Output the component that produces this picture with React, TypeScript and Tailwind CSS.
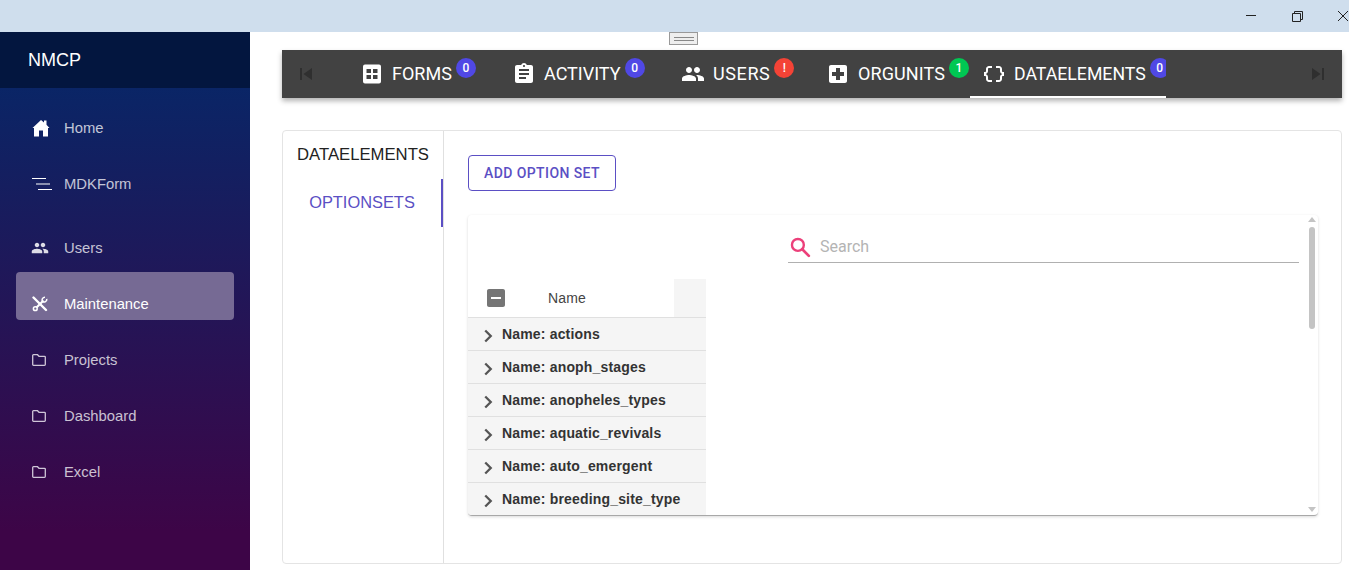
import React from "react";
import {
  MdAssignment,
  MdDataObject,
  MdIndeterminateCheckBox,
  MdLocalHospital,
  MdPeople,
  MdSkipNext,
  MdSkipPrevious,
} from "react-icons/md";

const arial = "font-['Liberation_Sans',Arial,sans-serif]";
const roboto = "font-['Roboto',sans-serif]";

const HomeIcon = () => (
  <svg width="18" height="18" viewBox="0 0 18 18" fill="white">
    <path d="M9 1 12 3.600V1.500H14.500V5.800L17.500 9H16V17.500H11V11.500H7V17.500H2V9H.5z" />
  </svg>
);

const LinesIcon = () => (
  <svg width="20" height="14" viewBox="0 0 20 14" stroke="white" strokeWidth="1.2">
    <path d="M0 1.500H14M4 7H18M6 12.500H20" />
  </svg>
);

const ToolsIcon = () => (
  <svg width="16" height="16" viewBox="0 0 16 16" fill="none" stroke="white">
    <path d="M1.500 1.500 14 14" strokeWidth="2.400" strokeLinecap="round" />
    <path d="M11.500 4.500 4.500 11.500" strokeWidth="2.200" />
    <circle cx="3.300" cy="12.700" r="1.900" strokeWidth="1.500" />
    <path d="M14.800 2.800A2.800 2.800 0 0 1 10.500 5.500M13 1.200A2.800 2.800 0 0 0 10.500 5.500" strokeWidth="1.500" />
  </svg>
);

const FolderIcon = () => (
  <svg width="14" height="12" viewBox="0 0 14 12" fill="none" stroke="#cfc6d8" strokeWidth="1.300">
    <path d="M1.500.7H5.500L7 2.300H12.500A.8.8 0 0 1 13.300 3.100V10.500A.8.8 0 0 1 12.500 11.300H1.500A.8.8 0 0 1 .7 10.500V1.500A.8.8 0 0 1 1.500.7Z" />
  </svg>
);

const FormsIcon = () => (
  <svg width="24" height="24" viewBox="0 0 24 24" fill="white">
    <path
      fillRule="evenodd"
      d="M5 2.500H19A2 2 0 0 1 21 4.500V19.500A2 2 0 0 1 19 21.500H5A2 2 0 0 1 3 19.500V4.500A2 2 0 0 1 5 2.500ZM6.500 7V11H11V7ZM13 7V11H17.500V7ZM6.500 13V17H11V13ZM13 13V17H17.500V13Z"
    />
  </svg>
);

const SearchIcon = () => (
  <svg width="25" height="25" viewBox="0 0 24 24" fill="none" stroke="#ec407a" className="shrink-0">
    <circle cx="9.500" cy="9.500" r="5.700" strokeWidth="2.300" />
    <path d="M13.700 13.700 20 20" strokeWidth="2.600" strokeLinecap="round" />
  </svg>
);

const ChevronIcon = () => (
  <svg width="22" height="22" viewBox="0 0 24 24" fill="none" stroke="#555" strokeWidth="2.500" className="mr-[3px] mt-[3px] -ml-[1px] shrink-0">
    <path d="M9 6 15 12 9 18" />
  </svg>
);

const navItems = [
  { label: "Home", icon: <HomeIcon />, gap: "" },
  { label: "MDKForm", icon: <LinesIcon />, gap: "mb-4" },
  { label: "Users", icon: <MdPeople size={18} className="-ml-[1px] opacity-85" />, gap: "" },
  { label: "Maintenance", icon: <ToolsIcon />, gap: "", active: true },
  { label: "Projects", icon: <FolderIcon />, gap: "" },
  { label: "Dashboard", icon: <FolderIcon />, gap: "" },
  { label: "Excel", icon: <FolderIcon />, gap: "" },
];

const tabs = [
  { label: "FORMS", icon: <FormsIcon />, badge: "0", color: "bg-[#5048e5]", width: "w-[152px]", track: "" },
  { label: "ACTIVITY", icon: <MdAssignment size={24} />, badge: "0", color: "bg-[#5048e5]", width: "w-[169px]", track: "" },
  { label: "USERS", icon: <MdPeople size={28} />, badge: "!", color: "bg-[#f44336]", width: "w-[145px]", track: "tracking-[0.6px]" },
  { label: "ORGUNITS", icon: <MdLocalHospital size={24} />, badge: "1", color: "bg-[#00c853]", width: "w-[160px]", track: "tracking-[0.1px]" },
];

const optionSets = [
  "actions",
  "anoph_stages",
  "anopheles_types",
  "aquatic_revivals",
  "auto_emergent",
  "breeding_site_type",
];

const Badge = ({ text, color }: { text: string; color: string }) => (
  <span className={`mb-[12px] ml-1 flex h-5 w-5 shrink-0 items-center justify-center rounded-full text-xs font-medium text-white ${color}`}>
    {text}
  </span>
);

const Sidebar = () => (
  <aside className={`flex w-[250px] shrink-0 flex-col ${arial}`}>
    <div className="flex h-14 shrink-0 items-center bg-[#03163f] pl-7 text-lg text-white">NMCP</div>
    <nav className="flex flex-1 flex-col bg-[linear-gradient(180deg,#0a2566_0%,#3d0547_92%)] px-4 pt-2">
      {navItems.map((item) => (
        <div
          key={item.label}
          className={`mb-2 flex h-12 items-center pt-4 text-[14.8px] ${item.gap} ${
            item.active ? "rounded bg-[#766a94] text-white" : "text-white/75"
          }`}
        >
          <span className="flex w-12 justify-start pl-4 text-white">{item.icon}</span>
          {item.label}
        </div>
      ))}
    </nav>
  </aside>
);

const TabBar = () => (
  <div className={`flex h-12 w-[1060px] items-center bg-[#424242] text-white shadow-[0_3px_5px_rgba(0,0,0,0.3)] ${roboto}`}>
    <div className="flex w-[62px] shrink-0 justify-start pl-[12px] text-[#2f2f2f]">
      <MdSkipPrevious size={24} />
    </div>
    {tabs.map((tab) => (
      <div key={tab.label} className={`flex h-12 shrink-0 items-center pl-4 ${tab.width}`}>
        <span className="flex w-6 justify-center">{tab.icon}</span>
        <span className={`ml-2 -mt-[2px] text-[18px] ${tab.track}`}>{tab.label}</span>
        <Badge text={tab.badge} color={tab.color} />
      </div>
    ))}
    <div className="flex h-12 w-[196px] shrink-0 items-center overflow-hidden border-b-2 border-white pl-3 pt-[2px]">
      <MdDataObject size={24} className="shrink-0" />
      <span className="ml-2 text-[17.7px]">DATAELEMENTS</span>
      <Badge text="0" color="bg-[#5048e5]" />
    </div>
    <div className="ml-auto pr-[12px] text-[#2f2f2f]">
      <MdSkipNext size={24} />
    </div>
  </div>
);

const OptionSetTable = () => (
  <div className="flex h-[301px] w-[850px] overflow-hidden rounded border-b border-[#a8a8a8] shadow-[0_1px_3px_rgba(0,0,0,0.15)]">
    <div className="min-w-0 flex-1">
      <div className="flex h-[64px] justify-end pr-2 pt-[17px]">
        <div className="flex h-[31px] w-[511px] items-center border-b border-[#b0b0b0]">
          <SearchIcon />
          <span className={`ml-[7px] text-base text-[#b4b4b4] ${roboto}`}>Search</span>
        </div>
      </div>
      <div className={`w-[238px] tracking-[0.17px] ${arial}`}>
        <div className="flex h-[39px] items-stretch border-b border-[#e0e0e0] text-sm text-[#444]">
          <div className="flex w-[206px] items-center">
            <MdIndeterminateCheckBox size={24} className="ml-4 text-[#757575]" />
            <span className="ml-[40px]">Name</span>
          </div>
          <div className="w-8 bg-[#f5f5f5]" />
        </div>
        {optionSets.map((name) => (
          <div
            key={name}
            className="flex h-[33px] items-center border-b border-[#e0e0e0] bg-[#f5f5f5] pl-[10px] text-sm font-bold text-[#333]"
          >
            <ChevronIcon />
            Name: {name}
          </div>
        ))}
      </div>
    </div>
    <div className="mr-[1px] flex w-[10px] flex-col items-center pt-[2px] text-[#c4c4c4]">
      <div className="h-0 w-0 border-x-[4px] border-b-[5px] border-x-transparent border-b-[#c4c4c4]" />
      <div className="mt-[5px] h-[102px] w-[6px] rounded-full bg-[#c4c4c4]" />
      <div className="mt-auto mb-[3px] h-0 w-0 border-x-[4px] border-t-[5px] border-x-transparent border-t-[#c4c4c4]" />
    </div>
  </div>
);

const Card = () => (
  <div className="mt-8 flex h-[434px] w-[1060px] rounded border border-[#e4e4e4]">
    <div className={`flex w-[161px] shrink-0 flex-col border-r border-[#e0e0e0] ${arial}`}>
      <div className="flex h-12 items-center justify-center text-[16.7px] text-[#222]">DATAELEMENTS</div>
      <div className="flex h-12 items-center justify-center border-r-2 border-[#5b4fc4] pb-[2px] text-[16.4px] text-[#5b4fc4]">OPTIONSETS</div>
    </div>
    <div className="flex-1 pl-6 pt-6">
      <button className={`h-9 w-[148px] rounded border border-[#5b4fc4] text-sm font-medium tracking-[0.4px] text-[#5b4fc4] ${roboto}`}>
        ADD OPTION SET
      </button>
      <div className="mt-6">
        <OptionSetTable />
      </div>
    </div>
  </div>
);

const App = () => (
  <div className="relative flex h-[570px] w-[1349px] flex-col overflow-hidden bg-white">
    <header className="flex h-8 shrink-0 items-center justify-end bg-[#cfdeed]">
      <svg width="149" height="32" viewBox="0 0 149 32" fill="none" stroke="#222" strokeWidth="1">
        <path d="M46 15.500H56" />
        <path d="M92.500 13.500H100.500V21.500H92.500ZM94.500 13.500V11.500H102.500V19.500H100.500" />
        <path d="M138 11L148 21M148 11L138 21" />
      </svg>
    </header>
    <div className="flex min-h-0 flex-1">
      <Sidebar />
      <main className="flex-1 pl-8 pt-[18px]">
        <TabBar />
        <Card />
      </main>
    </div>
    <div className="absolute left-[669px] top-[32px] flex h-[13px] w-[29px] flex-col items-center justify-center gap-[2px] border border-[#999] bg-[#eee]">
      <div className="h-px w-5 bg-[#888]" />
      <div className="h-px w-5 bg-[#888]" />
    </div>
  </div>
);

export default App;
